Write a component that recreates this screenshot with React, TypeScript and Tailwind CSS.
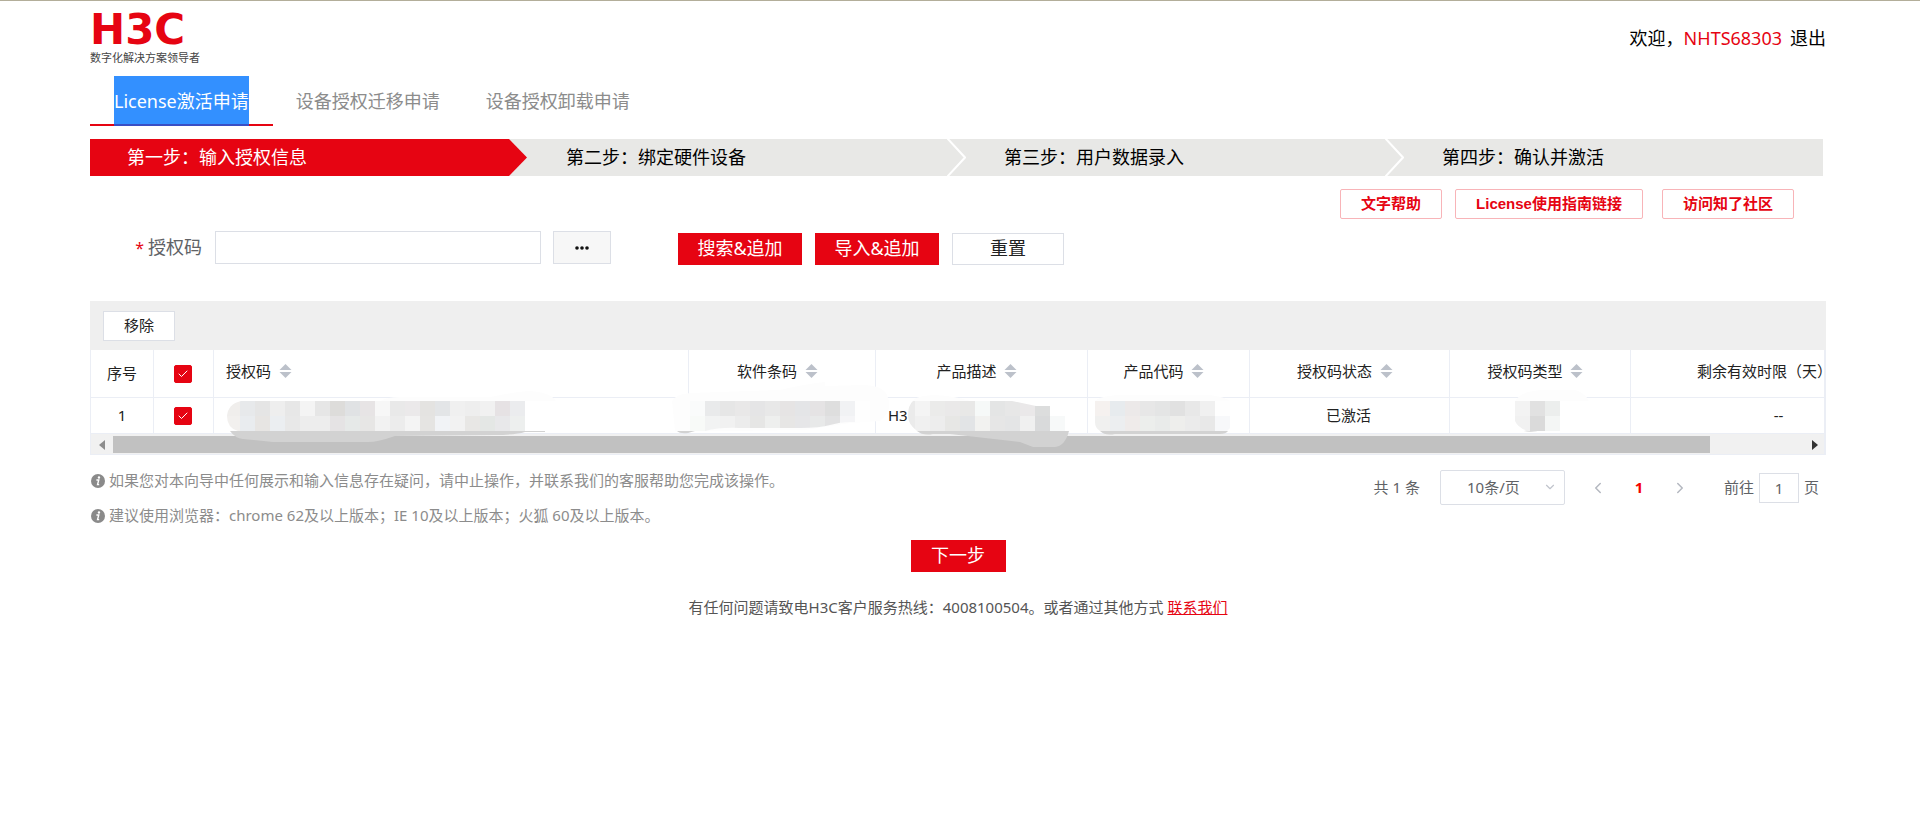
import { Check, ChevronDown, ChevronLeft, ChevronRight } from "lucide-react";
import { useState } from "react";

const TABS = ["License激活申请", "设备授权迁移申请", "设备授权卸载申请"];

const STEPS = ["第一步：输入授权信息", "第二步：绑定硬件设备", "第三步：用户数据录入", "第四步：确认并激活"];

const SORTABLE = ["软件条码", "产品描述", "产品代码", "授权码状态", "授权码类型"];

// masked values: x of the first block, then the colours of both rows
const MASKS = [
  {
    id: "code",
    x: 135,
    clip: "M151 51H435V81H148Q137 78 137 66Q138 54 151 51Z",
    rows: [
      "#f0eeec #e7e9eb #e5e5e5 #eeeeee #e7e7e7 #f4f4f4 #e6e6e6 #dddcda #e0e2e4 #e7e4e5 #f7f7f7 #e9e9e9 #ebe9ea #e4e3e1 #e3e5e7 #f0f0f0 #eeeeee #f1f1f1 #e6e2e4 #ebecee",
      "#f2f0ee #e9ecef #e7e5e3 #ebeef1 #e8e8e8 #ededed #ededed #e5e3e4 #e6e9e8 #e7e6e5 #f2f2f2 #ececec #f4f4f4 #e5e4e2 #f1f3f6 #f2f2f2 #e8e7e5 #e4e7e5 #e8e8ea #edefee"
    ]
  },
  {
    id: "barcode",
    x: 600,
    clip: "M600 51H795V72H760Q750 72 740 75T710 78H650Q630 77 615 81H600Z",
    rows: [
      "#fafbfb #e9eaeb #e6e6e6 #e9e8e8 #e5e5e6 #e8e8e8 #e6e4e4 #e4e5e7 #e5e3e4 #dedede #f1f2f4 #fefefe",
      "#f8faf8 #f2f3f3 #f1f1f1 #ececec #e6e6e5 #eeefee #e7e6e5 #e6e6e8 #e8e9e9 #e2e2e3 #f5f5f7 #fefefe"
    ]
  },
  {
    id: "desc",
    x: 810,
    clip: "M823 51H922L946 56H960V66H975V81H827Q818 74 818 66Q818 55 823 51Z",
    rows: [
      "#ebebeb #f4f4f4 #ebebea #eae9e9 #e8e8e7 #f6f9f8 #e4e5e5 #e7e7e7 #eae8e9 #dcdddd #ffffff",
      "#ebebeb #f0f0f0 #ededed #e7e7e5 #e2e4e6 #f2f2f0 #e6e6e6 #e4e5e6 #f0f0f0 #d9dadb #f7f9f9"
    ]
  },
  {
    id: "product",
    x: 1005,
    clip: "M1005 51H1140V78L1137 81H1010Q1005 78 1005 72Z",
    rows: [
      "#f5f1ef #e7ebee #ece9e9 #e7e7e7 #e4e5e5 #e1e1e1 #e8e8e8 #f0f0f0 #fefefe",
      "#f0f0ef #eceef0 #efebea #eceeec #e9ebea #eeeeec #ebebeb #e8e8e8 #f7f8fa"
    ]
  },
  {
    id: "kind",
    x: 1425,
    clip: "M1425 51H1470V81H1438Q1428 78 1425 71Z",
    rows: ["#f3f3f3 #e1e1e1 #eceeed", "#f1f1f1 #dadada #f4f6f5"]
  }
];

function MaskedValues() {
  return (
    <svg className="pointer-events-none absolute left-0 top-0" width="1560" height="104" viewBox="1 0 1560 104" aria-hidden="true">
      <g fill="#fdfdfd">
        <path d="M290 51Q298 47 310 47H400Q430 41 440 41Q460 42 466 51Z" />
        <path d="M582 51Q586 44 600 43L690 40Q715 34 735 32V36L775 35Q793 36 797 45Q804 60 790 71L760 73L715 80L640 81H585Z" />
        <path d="M823 51Q825 46 845 45Q865 46 880 51Z" />
        <path d="M1005 51Q1010 46 1030 45H1120Q1135 47 1140 51Z" />
        <path d="M1425 51Q1432 40 1455 40H1485Q1495 43 1499 51Z" />
      </g>
      <g fill="#d2d2d2">
        <path d="M140 81Q145 88 153 89L183 92H278Q288 92 305 86L405 85Q425 85 435 82L455 82V81Z" />
        <path d="M587 81Q590 84 598 83L605 81Z" />
        <path d="M827 81Q833 86 843 84H860L930 92L943 97H965Q975 96 979 81Z" />
        <path d="M1010 81Q1015 86 1025 84H1130Q1136 84 1138 81Z" />
        <path d="M1434 81Q1442 83 1452 80L1440 80Z" />
      </g>
      {MASKS.map((mask) => (
        <g key={mask.id} clipPath={`url(#mask-${mask.id})`}>
          <clipPath id={`mask-${mask.id}`}>
            <path d={mask.clip} />
          </clipPath>
          {mask.rows.map((row, y) =>
            row.split(" ").map((fill, i) => (
              <rect key={`${y}-${i}`} x={mask.x + i * 15} y={51 + y * 15} width="15" height="15" fill={fill} shapeRendering="crispEdges" />
            ))
          )}
        </g>
      ))}
    </svg>
  );
}

function StepArrow({ active }: { active: boolean }) {
  return (
    <svg className="h-[37px] w-[19px] shrink-0 bg-[#e8e8e6]" viewBox="0 0 19 37" aria-hidden="true">
      {active ? (
        <path d="M0 0L18 18.5L0 37Z" fill="#e60412" />
      ) : (
        <path d="M0 -1L18 18.5L0 38" fill="none" stroke="#fff" strokeWidth="2" />
      )}
    </svg>
  );
}

function SortIcon() {
  return (
    <span className="flex w-7 justify-center">
      <svg width="13" height="14" viewBox="0 0 13 14" fill="#bcc1ca" aria-hidden="true">
        <path d="M6.5 0L12.5 6H0.5Z" />
        <path d="M6.5 14L12.5 8H0.5Z" />
      </svg>
    </span>
  );
}

function CheckBox({ label }: { label: string }) {
  const [checked, setChecked] = useState(true);

  return (
    <label className="relative mx-auto block h-[18px] w-[18px]">
      <input
        type="checkbox"
        aria-label={label}
        checked={checked}
        onChange={() => setChecked(!checked)}
        className="block h-[18px] w-[18px] appearance-none rounded-xs border border-[#dcdfe6] bg-white checked:border-[#e60412] checked:bg-[#e60412]"
      />
      <Check className="pointer-events-none absolute left-[3px] top-[3px] h-3 w-3 text-white" strokeWidth={2} />
    </label>
  );
}

function InfoIcon() {
  return (
    <svg className="h-3.5 w-3.5 shrink-0" viewBox="0 0 13 13" aria-hidden="true">
      <circle cx="6.5" cy="6.5" r="6.5" fill="#8a8a8a" />
      <circle cx="7.4" cy="3.3" r="1.1" fill="#fff" />
      <path d="M5 5.6H7.2L6.1 9.9H7.6" fill="none" stroke="#fff" strokeWidth="1.3" />
    </svg>
  );
}

export default function App() {
  const [tab, setTab] = useState(0);
  const [code, setCode] = useState("");
  const [page, setPage] = useState("1");

  return (
    <div className="border-t border-[#b3ae9a] bg-white pl-[90px] pr-[94px] font-['Noto_Sans','Noto_Sans_CJK_SC',sans-serif] text-[15px] text-[#333]">
      <header className="flex h-[75px] items-start justify-between">
        <div className="pt-3">
          <div className="h-[37px] font-['DejaVu_Sans',sans-serif] text-[42px] font-bold leading-[34px] text-[#e60412]">H3C</div>
          <p className="text-[11px] leading-4 text-[#444]">数字化解决方案领导者</p>
        </div>
        <div className="flex pt-[25px] text-lg leading-6 text-black">
          <span>欢迎，</span>
          <a href="#account" className="text-[#e60412]">NHTS68303</a>
          <a href="#logout" className="ml-2">退出</a>
        </div>
      </header>

      <nav className="flex text-lg leading-[50px]">
        {TABS.map((name, i) => (
          <button
            key={name}
            type="button"
            onClick={() => setTab(i)}
            className={
              i === tab
                ? "h-[50px] border-b-2 border-[#e60412] px-6 text-white"
                : "h-[50px] border-b-2 border-transparent px-[23px] text-[#8c8c8c]"
            }
          >
            <span className={i === tab ? "block h-[50px] border-b-2 border-[#3a4fc4] bg-[#3390ff]" : "block h-[50px]"}>{name}</span>
          </button>
        ))}
      </nav>

      <ol className="mr-[3px] mt-[13px] flex h-[37px] text-lg leading-[37px] text-black">
        {STEPS.map((step, i) => (
          <li key={step} className={i < 3 ? "flex grow basis-[438px]" : "flex grow basis-[419px]"}>
            <span className={i === 0 ? "grow bg-[#e60412] pl-[37px] text-white" : "grow bg-[#e8e8e6] pl-[38px]"}>{step}</span>
            {i < 3 && <StepArrow active={i === 0} />}
          </li>
        ))}
      </ol>

      <div className="mr-8 mt-[13px] flex justify-end font-['Liberation_Sans','Noto_Sans_CJK_SC',sans-serif] font-bold text-[#e60412]">
        <button type="button" className="h-[30px] w-[102px] rounded-xs border border-[#f8b4b8]">文字帮助</button>
        <button type="button" className="ml-[13px] h-[30px] w-[188px] rounded-xs border border-[#f8b4b8]">License使用指南链接</button>
        <button type="button" className="ml-[19px] h-[30px] w-[132px] rounded-xs border border-[#f8b4b8]">访问知了社区</button>
      </div>

      <form className="mt-3 flex items-start text-lg" onSubmit={(e) => e.preventDefault()}>
        <label htmlFor="code" className="w-[125px] pr-[13px] text-right leading-[33px] text-[#606266]">
          <span className="mr-1 text-base text-[#e60412]">*</span>
          授权码
        </label>
        <input
          id="code"
          value={code}
          onChange={(e) => setCode(e.target.value)}
          className="h-[33px] w-[326px] border border-[#dcdfe6] px-3 outline-none"
        />
        <button type="button" aria-label="更多" className="ml-3 flex h-[33px] w-[58px] items-center justify-center border border-[#dcdfe6] bg-[#f7f7f7]">
          <svg width="14" height="4" viewBox="0 0 14 4" fill="#111" aria-hidden="true">
            <circle cx="2" cy="2" r="1.8" />
            <circle cx="7" cy="2" r="1.8" />
            <circle cx="12" cy="2" r="1.8" />
          </svg>
        </button>
        <div className="ml-[67px] mt-0.5 flex gap-[13px] leading-[30px]">
          <button type="submit" className="h-8 w-[124px] bg-[#e60412] pb-0.5 text-white">搜索&amp;追加</button>
          <button type="button" className="h-8 w-[124px] bg-[#e60412] pb-0.5 text-white">导入&amp;追加</button>
          <button type="reset" onClick={() => setCode("")} className="flex h-8 w-[112px] items-center justify-center border border-[#dcdfe6] pb-0.5 text-[#222]">重置</button>
        </div>
      </form>

      <section className="mt-9">
        <div className="bg-[#efefef] px-[13px] pb-[9px] pt-2.5">
          <button type="button" className="block h-[30px] w-[72px] border border-[#dcdfe6] bg-white pb-0.5 text-[#222]">移除</button>
        </div>

        <div className="relative overflow-hidden border-b border-l border-r-2 border-[#ebeef5]">
          <table className="w-[1836px] table-fixed border-separate border-spacing-0 text-[#222] [&_td]:border-b [&_td]:border-r [&_td]:border-[#ebeef5] [&_th]:border-b [&_th]:border-r [&_th]:border-[#ebeef5]">
            <colgroup>
              <col className="w-[63px]" />
              <col className="w-[60px]" />
              <col className="w-[475px]" />
              <col className="w-[187px]" />
              <col className="w-[212px]" />
              <col className="w-[162px]" />
              <col className="w-[200px]" />
              <col className="w-[181px]" />
              <col className="w-[296px]" />
            </colgroup>
            <thead>
              <tr className="h-12 leading-5">
                <th className="pb-0.5 font-normal">序号</th>
                <th className="pr-0.5">
                  <CheckBox label="全选" />
                </th>
                <th className="pb-1.5 pl-3 font-normal">
                  <span className="flex items-center">
                    授权码
                    <SortIcon />
                  </span>
                </th>
                {SORTABLE.map((name) => (
                  <th key={name} className="pb-1.5 pr-0.5 font-normal">
                    <span className="flex items-center justify-center">
                      {name}
                      <SortIcon />
                    </span>
                  </th>
                ))}
                <th className="pb-1.5 font-normal">
                  <span className="flex items-center justify-center">
                    剩余有效时限（天）
                    <SortIcon />
                  </span>
                </th>
              </tr>
            </thead>
            <tbody>
              <tr className="h-9 text-center leading-5">
                <td className="pb-0.5">1</td>
                <td className="pr-0.5">
                  <CheckBox label="选择第1行" />
                </td>
                <td />
                <td />
                <td className="pb-0.5 pl-3 text-left">H3</td>
                <td />
                <td className="pb-0.5 pr-0.5">已激活</td>
                <td />
                <td className="pb-0.5">--</td>
              </tr>
            </tbody>
          </table>
          <div className="flex h-5 items-center bg-[#f1f1f1] pr-1.5 pt-0.5">
            <svg className="mx-2 h-2.5 w-1.5 shrink-0" viewBox="0 0 6 10" aria-hidden="true">
              <path d="M6 0V10L0 5Z" fill="#8c8c8c" />
            </svg>
            <div className="h-full grow">
              <div className="h-[17px] w-[94%] bg-[#c1c1c1]" />
            </div>
            <svg className="h-2.5 w-1.5 shrink-0" viewBox="0 0 6 10" aria-hidden="true">
              <path d="M0 0V10L6 5Z" fill="#333" />
            </svg>
          </div>
          <MaskedValues />
        </div>

        <div className="flex items-start justify-between pt-2">
          <div className="pl-px leading-[35px] text-[#8c8c8c]">
            <p className="flex items-center gap-1">
              <InfoIcon />
              如果您对本向导中任何展示和输入信息存在疑问，请中止操作，并联系我们的客服帮助您完成该操作。
            </p>
            <p className="flex items-center gap-1">
              <InfoIcon />
              建议使用浏览器：chrome 62及以上版本；IE 10及以上版本；火狐 60及以上版本。
            </p>
          </div>

          <div className="mr-[7px] mt-[7px] flex h-[35px] items-center text-[#606266]">
            <span>共 1 条</span>
            <span className="relative ml-5">
              <select aria-label="每页条数" className="block h-[35px] w-[125px] appearance-none rounded-xs border border-[#dcdfe6] bg-white pl-[26px]">
                <option>10条/页</option>
                <option>20条/页</option>
                <option>50条/页</option>
              </select>
              <ChevronDown className="pointer-events-none absolute right-2 top-2.5 h-3.5 w-3.5 text-[#c0c4cc]" strokeWidth={2} />
            </span>
            <button type="button" aria-label="上一页" className="ml-6 text-[#b4b8c0]">
              <ChevronLeft className="h-[18px] w-[18px]" />
            </button>
            <button type="button" className="w-[64px] font-bold text-[#f50000]">1</button>
            <button type="button" aria-label="下一页" className="text-[#b4b8c0]">
              <ChevronRight className="h-[18px] w-[18px]" />
            </button>
            <label htmlFor="page" className="ml-[35px]">前往</label>
            <input
              id="page"
              value={page}
              onChange={(e) => setPage(e.target.value)}
              className="mx-[5px] h-[30px] w-10 border border-[#dcdfe6] text-center outline-none"
            />
            <span>页</span>
          </div>
        </div>
      </section>

      <footer className="mt-[7px] flex flex-col items-center">
        <button type="button" className="h-8 w-[95px] bg-[#e60412] pb-0.5 text-lg leading-[30px] text-white">下一步</button>
        <p className="mt-[25px] leading-5 text-[#555]">
          有任何问题请致电H3C客户服务热线：4008100504。或者通过其他方式{" "}
          <a href="#contact" className="text-[#e60412] underline">联系我们</a>
        </p>
      </footer>
    </div>
  );
}
